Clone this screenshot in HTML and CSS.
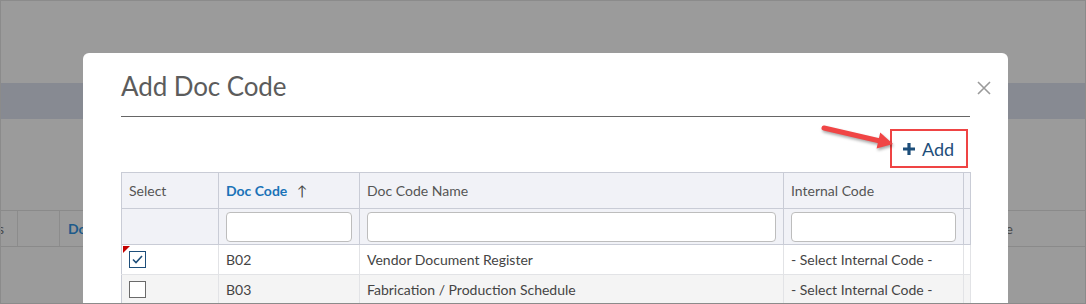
FILE: index.html
```html
<!DOCTYPE html>
<html lang="en">
  <head>
    <meta charset="UTF-8" />
    <meta name="viewport" content="width=device-width, initial-scale=1.0" />
    <link rel="stylesheet" href="styles.css">
  </head>
  <body>
    <!-- page behind the dialog -->
    <div class="page">
      <div class="page-top"></div>
      <div class="page-band"></div>
      <div class="page-gap"></div>
      <div class="page-grid">
        <div class="page-cell page-cell-first">Actions</div>
        <div class="page-cell"></div>
        <div class="page-cell page-cell-link">Doc Code</div>
        <div class="page-cell page-cell-last">Internal Code</div>
      </div>
    </div>

    <!-- dialog -->
    <div class="modal">
      <button class="modal-close" aria-label="Close">
        <svg width="14" height="14" viewBox="0 0 14 14">
          <path d="M1 1L13 13M13 1L1 13" stroke="#9a9a9a" stroke-width="1.6" fill="none" />
        </svg>
      </button>

      <h2 class="modal-title">Add Doc Code</h2>

      <div class="toolbar">
        <button class="btn-add">
          <svg width="12" height="12" viewBox="0 0 12 12">
            <path d="M6 0V12M0 6H12" stroke="#1d4e7a" stroke-width="3.2" fill="none" />
          </svg>
          <span>Add</span>
        </button>
      </div>

      <svg class="callout-arrow" width="80" height="36" viewBox="0 0 80 36">
        <path d="M6 8L61 20.7" stroke="#f04545" stroke-width="5" stroke-linecap="round" fill="none" />
        <path d="M75 24L58.6 28.6L62.2 12.6Z" fill="#f04545" />
      </svg>

      <table class="grid">
        <colgroup>
          <col style="width: 97px" />
          <col style="width: 141px" />
          <col style="width: 424px" />
          <col style="width: 180px" />
          <col style="width: 7px" />
        </colgroup>
        <thead>
          <tr class="grid-head">
            <th>Select</th>
            <th class="sorted">Doc Code <span class="sort-icon">&#8593;</span></th>
            <th>Doc Code Name</th>
            <th>Internal Code</th>
            <th></th>
          </tr>
          <tr class="grid-filter">
            <th></th>
            <th><input type="text" /></th>
            <th><input type="text" /></th>
            <th><input type="text" /></th>
            <th></th>
          </tr>
        </thead>
        <tbody>
          <tr>
            <td class="select-cell">
              <span class="dirty-mark"></span>
              <span class="check check-on">
                <svg width="11" height="9" viewBox="0 0 11 9">
                  <path d="M1 4.5L4 7.5L10 1" stroke="#1d4e7a" stroke-width="1.6" fill="none" />
                </svg>
              </span>
            </td>
            <td>B02</td>
            <td>Vendor Document Register</td>
            <td>- Select Internal Code -</td>
            <td></td>
          </tr>
          <tr class="row-alt">
            <td class="select-cell"><span class="check"></span></td>
            <td>B03</td>
            <td>Fabrication / Production Schedule</td>
            <td>- Select Internal Code -</td>
            <td></td>
          </tr>
        </tbody>
      </table>
    </div>
  </body>
</html>
```

FILE: styles.css
```css
/* frame */
body {
  margin: 0;
  width: 1086px;
  height: 304px;
  box-sizing: border-box;
  border: 1px solid #8b8b8b;
  background-color: #9b9b9b;
  overflow: hidden;
  position: relative;
  font-family: Lato, "Noto Sans", sans-serif;
  color: #444;
}

/* page behind the overlay */
.page-top {
  height: 82px;
}

.page-band {
  height: 36px;
  background-color: #878a92;
}

.page-gap {
  height: 91px;
}

.page-grid {
  display: grid;
  grid-template-columns: 17px 42px 1fr 200px;
  height: 35px;
  border-top: 1px solid #8a8a8a;
  border-bottom: 1px solid #8a8a8a;
  font-size: 14px;
}

.page-cell {
  display: flex;
  align-items: center;
  padding: 0 8px;
  border-right: 1px solid #8c8c8c;
  color: #4a4a4a;
  overflow: hidden;
  white-space: nowrap;
}

.page-cell-first {
  justify-content: flex-end;
  padding: 0 13px 0 0;
}

.page-cell-link {
  color: #1d5a8a;
  font-weight: 700;
}

.page-cell-last {
  justify-content: flex-end;
  padding: 0 72px 0 0;
  border-right: none;
}

/* dialog */
.modal {
  position: absolute;
  left: 82px;
  top: 52px;
  width: 925px;
  height: 251px;
  box-sizing: border-box;
  padding: 0 38px;
  background-color: #fff;
  border-radius: 6px 6px 0 0;
  overflow: hidden;
}

.modal-close {
  position: absolute;
  right: 17px;
  top: 28px;
  width: 14px;
  height: 14px;
  padding: 0;
  border: none;
  background: none;
  display: flex;
}

.modal-title {
  margin: 0;
  padding: 18px 0 14px;
  font-size: 26px;
  font-weight: 400;
  line-height: 31px;
  letter-spacing: -0.1px;
  color: #5c5c5c;
  border-bottom: 1px solid #666;
}

.toolbar {
  display: flex;
  justify-content: flex-end;
  padding: 12px 2px 4px 0;
}

.btn-add {
  display: flex;
  align-items: center;
  gap: 7px;
  height: 39px;
  width: 78px;
  box-sizing: border-box;
  padding: 0 11px;
  border: 2px solid #ef4444;
  background-color: #fff;
  font-family: Lato, "Noto Sans", sans-serif;
  font-size: 18px;
  color: #1d4e7a;
}

.callout-arrow {
  position: absolute;
  left: 735px;
  top: 67px;
  filter: drop-shadow(1px 2px 1.5px rgba(0, 0, 0, 0.35));
}

/* grid */
.grid {
  width: 100%;
  table-layout: fixed;
  border-collapse: collapse;
  font-size: 14px;
}

.grid th,
.grid td {
  border: 1px solid #c9ccd6;
  padding: 0 7px;
  text-align: left;
  white-space: nowrap;
  overflow: hidden;
}

.grid-head th {
  height: 35px;
  background-color: #f1f2f7;
  font-weight: 400;
  color: #555;
}

.grid-head .sorted {
  color: #1a73b8;
  font-weight: 700;
}

.sort-icon {
  margin-left: 6px;
  color: #444;
  font-weight: 400;
}

.grid-filter th {
  height: 35px;
  background-color: #f1f2f7;
}

.grid-filter input {
  display: block;
  width: 100%;
  height: 30px;
  box-sizing: border-box;
  border: 1px solid #bdbdbd;
  border-radius: 4px;
  background-color: #fff;
}

.grid td {
  height: 29px;
  border-color: #e2e3e6;
  color: #444;
}

.grid td:first-child {
  border-left-color: #c9ccd6;
}

.row-alt td {
  background-color: #f4f4f4;
}

.select-cell {
  position: relative;
}

.dirty-mark {
  position: absolute;
  left: 1px;
  top: 1px;
  width: 0;
  height: 0;
  border-top: 7px solid #c40000;
  border-right: 7px solid transparent;
}

.check {
  display: flex;
  align-items: center;
  justify-content: center;
  width: 17px;
  height: 17px;
  box-sizing: border-box;
  border: 1.5px solid #6a6a6a;
  background-color: #fff;
}

.check-on {
  border-color: #1d4e7a;
}
```
